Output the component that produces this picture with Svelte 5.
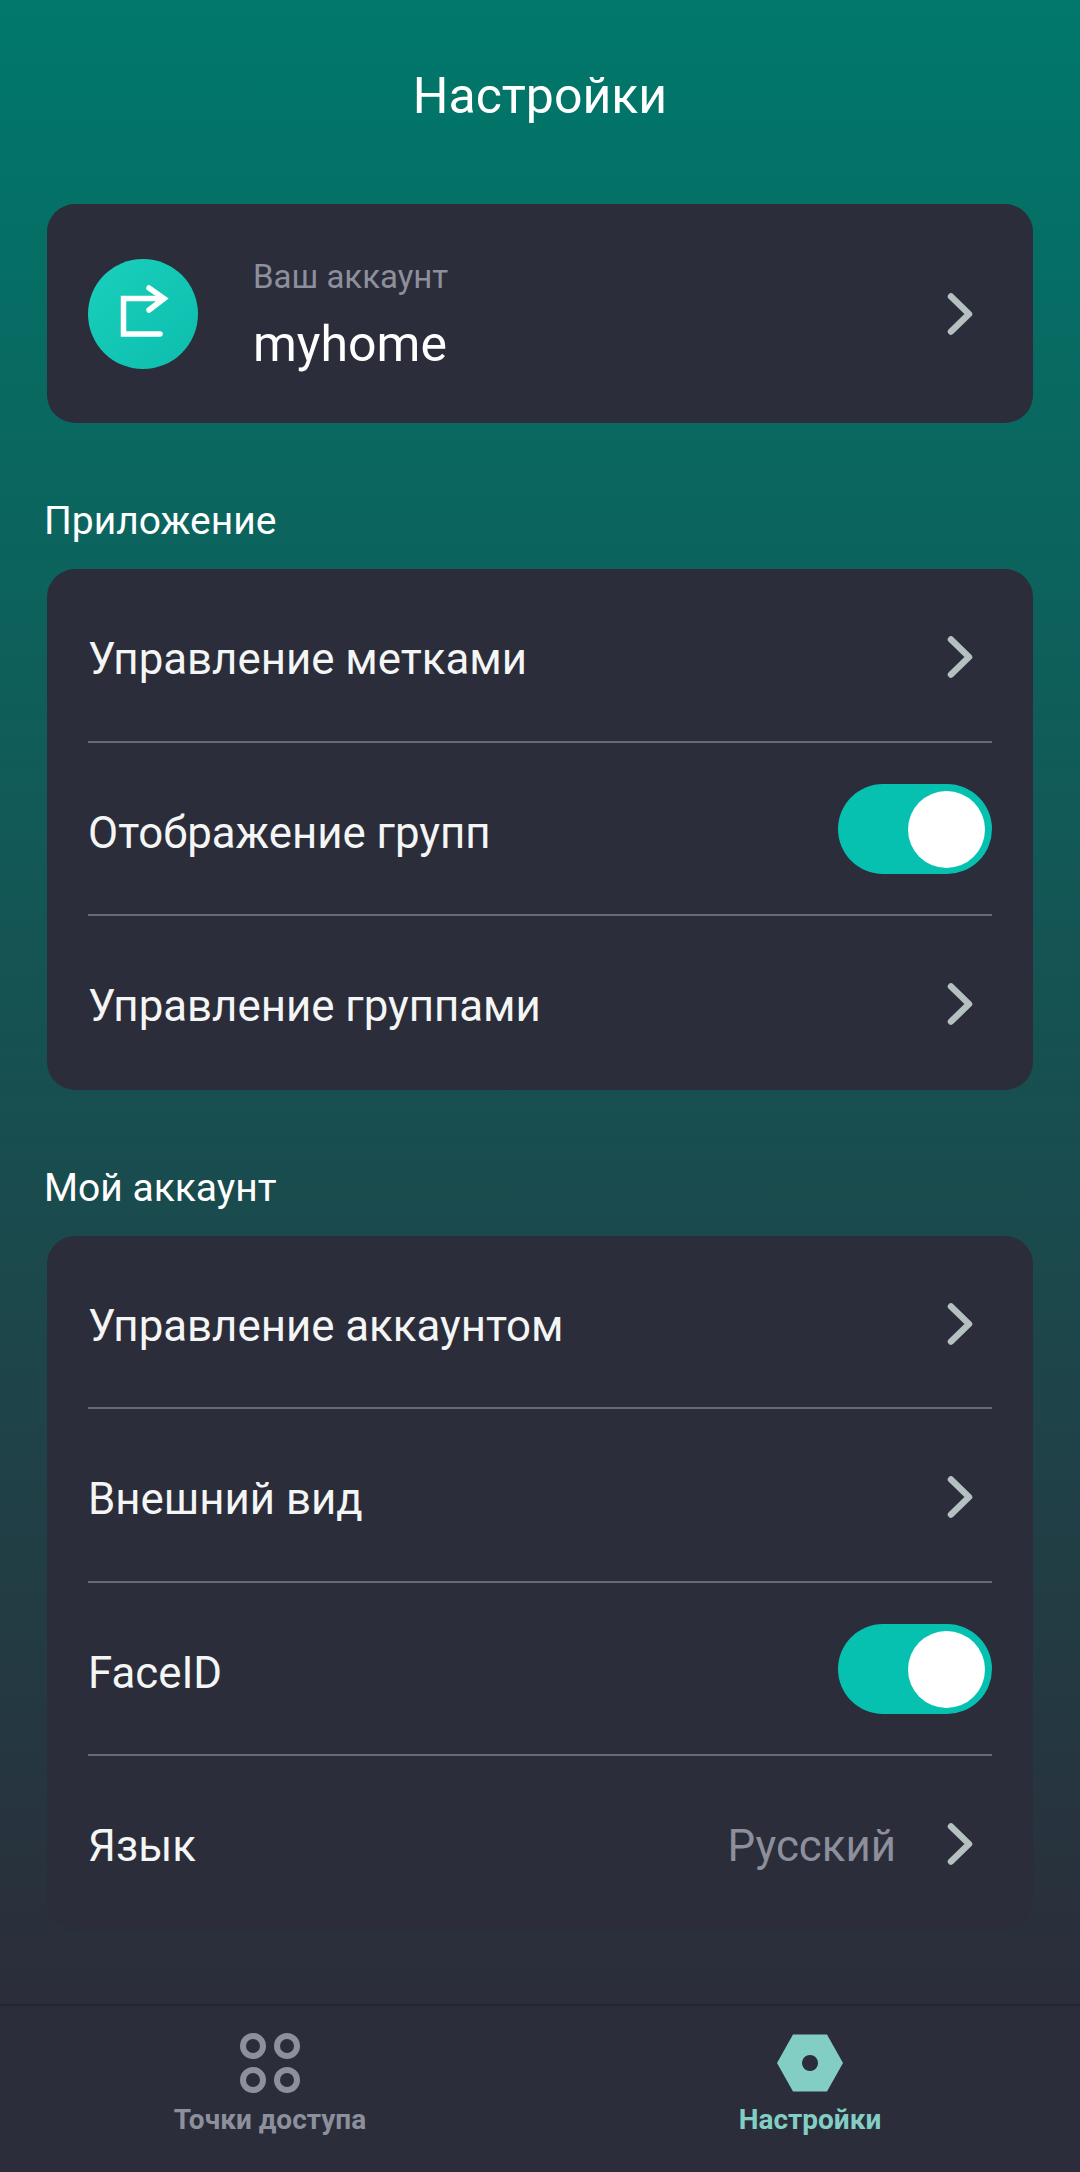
<script lang="ts">
	const appRows = [
		{ label: 'Управление метками', type: 'link' },
		{ label: 'Отображение групп', type: 'toggle' },
		{ label: 'Управление группами', type: 'link' }
	];
	const accountRows = [
		{ label: 'Управление аккаунтом', type: 'link' },
		{ label: 'Внешний вид', type: 'link' },
		{ label: 'FaceID', type: 'toggle' },
		{ label: 'Язык', type: 'link', value: 'Русский' }
	];
	const sections = [
		{ title: 'Приложение', rows: appRows },
		{ title: 'Мой аккаунт', rows: accountRows }
	];
</script>

{#snippet chevron()}
	<svg class="chevron" viewBox="0 0 28 44" width="28" height="44" aria-hidden="true">
		<path d="M5 4.500 L23 22 L5 39.500" />
	</svg>
{/snippet}

<div class="page">
	<main class="content">
		<h1 class="title">Настройки</h1>

		<div class="card account">
			<div class="avatar">
				<svg viewBox="0 0 110 110" width="110" height="110" aria-hidden="true">
					<path d="M74 39.500 H35.500 V75 H72" />
					<path d="M61 29 L76 39.500 L61 51" />
				</svg>
			</div>
			<div class="account-text">
				<span class="account-hint">Ваш аккаунт</span>
				<span class="account-name">myhome</span>
			</div>
			{@render chevron()}
		</div>

		{#each sections as section}
			<h2 class="section-title">{section.title}</h2>
			<div class="card list">
				{#each section.rows as row}
					<div class="row">
						<span class="row-label">{row.label}</span>
						{#if row.value}
							<span class="row-value">{row.value}</span>
						{/if}
						{#if row.type === 'toggle'}
							<div class="toggle"><div class="knob"></div></div>
						{:else}
							{@render chevron()}
						{/if}
					</div>
				{/each}
			</div>
		{/each}
	</main>

	<nav class="tabbar">
		<div class="tab">
			<svg viewBox="0 0 60 60" width="60" height="60" aria-hidden="true">
				<g class="rings">
					<circle cx="13" cy="13" r="10" />
					<circle cx="47" cy="13" r="10" />
					<circle cx="13" cy="47" r="10" />
					<circle cx="47" cy="47" r="10" />
				</g>
			</svg>
			<span>Точки доступа</span>
		</div>
		<div class="tab active">
			<svg viewBox="0 0 66 60" width="66" height="60" aria-hidden="true">
				<path
					class="hex"
					fill-rule="evenodd"
					d="M16 1.500 H50 L66 30 L50 58.500 H16 L0 30 Z M33 22 a8 8 0 1 0 0.010 0 Z"
				/>
			</svg>
			<span>Настройки</span>
		</div>
	</nav>
</div>

<style>
	:global(body) {
		margin: 0;
		background: #2b2d3a;
	}

	.page {
		display: flex;
		flex-direction: column;
		width: 1080px;
		height: 2172px;
		font-family: Roboto, 'Noto Sans', sans-serif;
		color: #fff;
		background: linear-gradient(180deg, #00786b 0%, #2b2d3a 2006px);
	}

	.content {
		flex: 1;
		padding: 0 47px;
	}

	.title {
		margin: 0;
		height: 204px;
		padding-top: 68px;
		box-sizing: border-box;
		font-size: 50px;
		line-height: 56px;
		font-weight: 400;
		text-align: center;
	}

	.card {
		background: #2b2d3a;
		border-radius: 28px;
	}

	.account {
		display: flex;
		align-items: center;
		height: 219px;
		padding: 0 41px;
		box-sizing: border-box;
	}

	.avatar {
		width: 110px;
		height: 110px;
		border-radius: 50%;
		background: linear-gradient(135deg, #1ad0bd, #0dbdad);
		flex: none;
	}

	.avatar svg {
		display: block;
		fill: none;
		stroke: #fff;
		stroke-width: 5.500;
		stroke-linecap: round;
	}

	.account-text {
		flex: 1;
		display: flex;
		flex-direction: column;
		margin-left: 55px;
		padding-top: 2px;
	}

	.account-hint {
		font-size: 33px;
		line-height: 40px;
		color: #8d8f9c;
	}

	.account-name {
		margin-top: 18px;
		font-size: 50px;
		line-height: 58px;
		color: #fff;
	}

	.chevron {
		flex: none;
		margin-top: 5px;
		margin-right: 18px;
		fill: none;
		stroke: #b5c0c0;
		stroke-width: 6.500;
		stroke-linecap: round;
		stroke-linejoin: round;
	}

	.account .chevron {
		margin-top: 0;
	}

	.section-title {
		margin: 74px 0 24px -3px;
		font-size: 39px;
		line-height: 48px;
		font-weight: 400;
	}

	.list {
		padding: 0 41px;
	}

	.row {
		display: flex;
		align-items: center;
		height: 173.500px;
		border-bottom: 2px solid #676975;
		box-sizing: border-box;
	}

	.row:last-child {
		border-bottom-color: transparent;
	}

	.row-label {
		flex: 1;
		padding-top: 9px;
		font-size: 43.800px;
		color: #f4f5f5;
	}

	.row-value {
		margin-right: 50px;
		padding-top: 9px;
		font-size: 43.800px;
		color: #8d8f9c;
	}

	.toggle {
		display: flex;
		justify-content: flex-end;
		align-items: center;
		width: 154px;
		height: 90px;
		margin-top: 2px;
		padding: 0 7px;
		box-sizing: border-box;
		border-radius: 45px;
		background: #06c1b0;
	}

	.knob {
		width: 77px;
		height: 77px;
		border-radius: 50%;
		background: #fff;
	}

	.tabbar {
		display: grid;
		grid-template-columns: 1fr 1fr;
		height: 166px;
		border-top: 2px solid #24252f;
		background: #2b2d3a;
		box-sizing: content-box;
		flex: none;
	}

	.tab {
		display: flex;
		flex-direction: column;
		align-items: center;
		padding-top: 27px;
		font-size: 28px;
		line-height: 30px;
		font-weight: 700;
		color: #8d8f9c;
	}

	.tab svg {
		display: block;
		margin-bottom: 12px;
	}

	.tab.active {
		color: #82cdc4;
	}

	.rings {
		fill: none;
		stroke: #8d8f9c;
		stroke-width: 6;
	}

	.hex {
		fill: #82cdc4;
	}
</style>
